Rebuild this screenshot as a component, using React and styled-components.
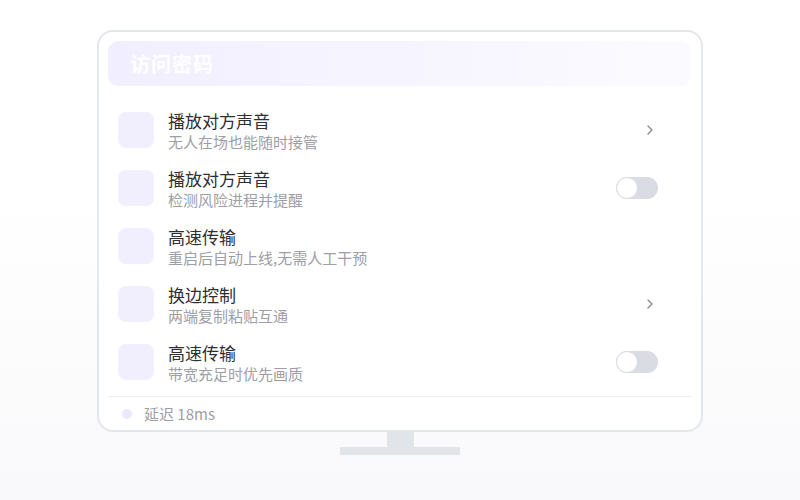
import React from "react";
import styled, { createGlobalStyle } from "styled-components";

const Global = createGlobalStyle`
  html, body { margin: 0; padding: 0; }
  body {
    width: 800px;
    height: 500px;
    overflow: hidden;
    font-family: "Noto Sans CJK SC", "Noto Sans", sans-serif;
    background: linear-gradient(180deg, #ffffff 0%, #ffffff 38%, #f9f9fb 100%);
  }
`;

const Page = styled.div`
  width: 800px;
  height: 500px;
  display: flex;
  flex-direction: column;
  align-items: center;
  padding-top: 30px;
  box-sizing: border-box;
`;

const Monitor = styled.div`
  width: 606px;
  height: 402px;
  box-sizing: border-box;
  border: 2px solid #e3e6eb;
  border-radius: 16px;
  background: #ffffff;
  padding: 9px 10px 0 9px;
  display: flex;
  flex-direction: column;
`;

const Header = styled.div`
  height: 45px;
  border-radius: 10px;
  background: linear-gradient(90deg, #f1efff 0%, #f6f5ff 50%, #fbfbff 100%);
  display: flex;
  align-items: center;
  padding-left: 22px;
  font-size: 20px;
  font-weight: 700;
  color: #ffffff;
  letter-spacing: 1px;
`;

const List = styled.div`
  display: flex;
  flex-direction: column;
  padding: 15px 0 5px;
  border-bottom: 1px solid #eeeff3;
`;

const Row = styled.div`
  height: 58px;
  display: flex;
  align-items: center;
  padding: 0 33px 0 10px;
`;

const IconBox = styled.div`
  width: 36px;
  height: 36px;
  border-radius: 8px;
  background: #f1effd;
  flex: none;
`;

const Texts = styled.div`
  flex: 1;
  margin-left: 14px;
  display: flex;
  flex-direction: column;
  padding-top: 2px;
`;

const Title = styled.div`
  font-size: 17px;
  line-height: 21px;
  color: #2e2e33;
`;

const Sub = styled.div`
  font-size: 15px;
  line-height: 21px;
  color: #9d9ea6;
`;

const Chevron = styled.svg`
  width: 8px;
  height: 12px;
  margin-right: 4px;
`;

const Toggle = styled.div`
  width: 42px;
  height: 22px;
  border-radius: 11px;
  background: #d9dce2;
  position: relative;
  box-sizing: border-box;
`;

const Knob = styled.div`
  position: absolute;
  left: 0;
  top: 0;
  width: 22px;
  height: 22px;
  box-sizing: border-box;
  border-radius: 50%;
  background: #ffffff;
  border: 1.5px solid #d9dce2;
`;

const Footer = styled.div`
  flex: 1;
  display: flex;
  align-items: center;
  padding-left: 14px;
  gap: 12px;
  font-size: 15px;
  color: #9d9ea6;
`;

const Dot = styled.span`
  width: 10px;
  height: 10px;
  border-radius: 50%;
  background: #ebe9fb;
`;

const Neck = styled.div`
  width: 27px;
  height: 15px;
  background: #e1e4e9;
`;

const Base = styled.div`
  width: 120px;
  height: 8px;
  background: #e1e4e9;
`;

const rows = [
  { t: "播放对方声音", s: "无人在场也能随时接管", a: "chevron" },
  { t: "播放对方声音", s: "检测风险进程并提醒", a: "toggle" },
  { t: "高速传输", s: "重启后自动上线,无需人工干预", a: null },
  { t: "换边控制", s: "两端复制粘贴互通", a: "chevron" },
  { t: "高速传输", s: "带宽充足时优先画质", a: "toggle" },
];

export default function App() {
  return (
    <>
      <Global />
      <Page>
        <Monitor>
          <Header>访问密码</Header>
          <List>
            {rows.map((r, i) => (
              <Row key={i}>
                <IconBox />
                <Texts>
                  <Title>{r.t}</Title>
                  <Sub>{r.s}</Sub>
                </Texts>
                {r.a === "chevron" && (
                  <Chevron viewBox="0 0 8 12">
                    <polyline points="2,2 6,6 2,10" fill="none" stroke="#8a8c94" strokeWidth="1.4" strokeLinecap="round" strokeLinejoin="round" />
                  </Chevron>
                )}
                {r.a === "toggle" && (
                  <Toggle>
                    <Knob />
                  </Toggle>
                )}
              </Row>
            ))}
          </List>
          <Footer>
            <Dot />
            <span>延迟 18ms</span>
          </Footer>
        </Monitor>
        <Neck />
        <Base />
      </Page>
    </>
  );
}
